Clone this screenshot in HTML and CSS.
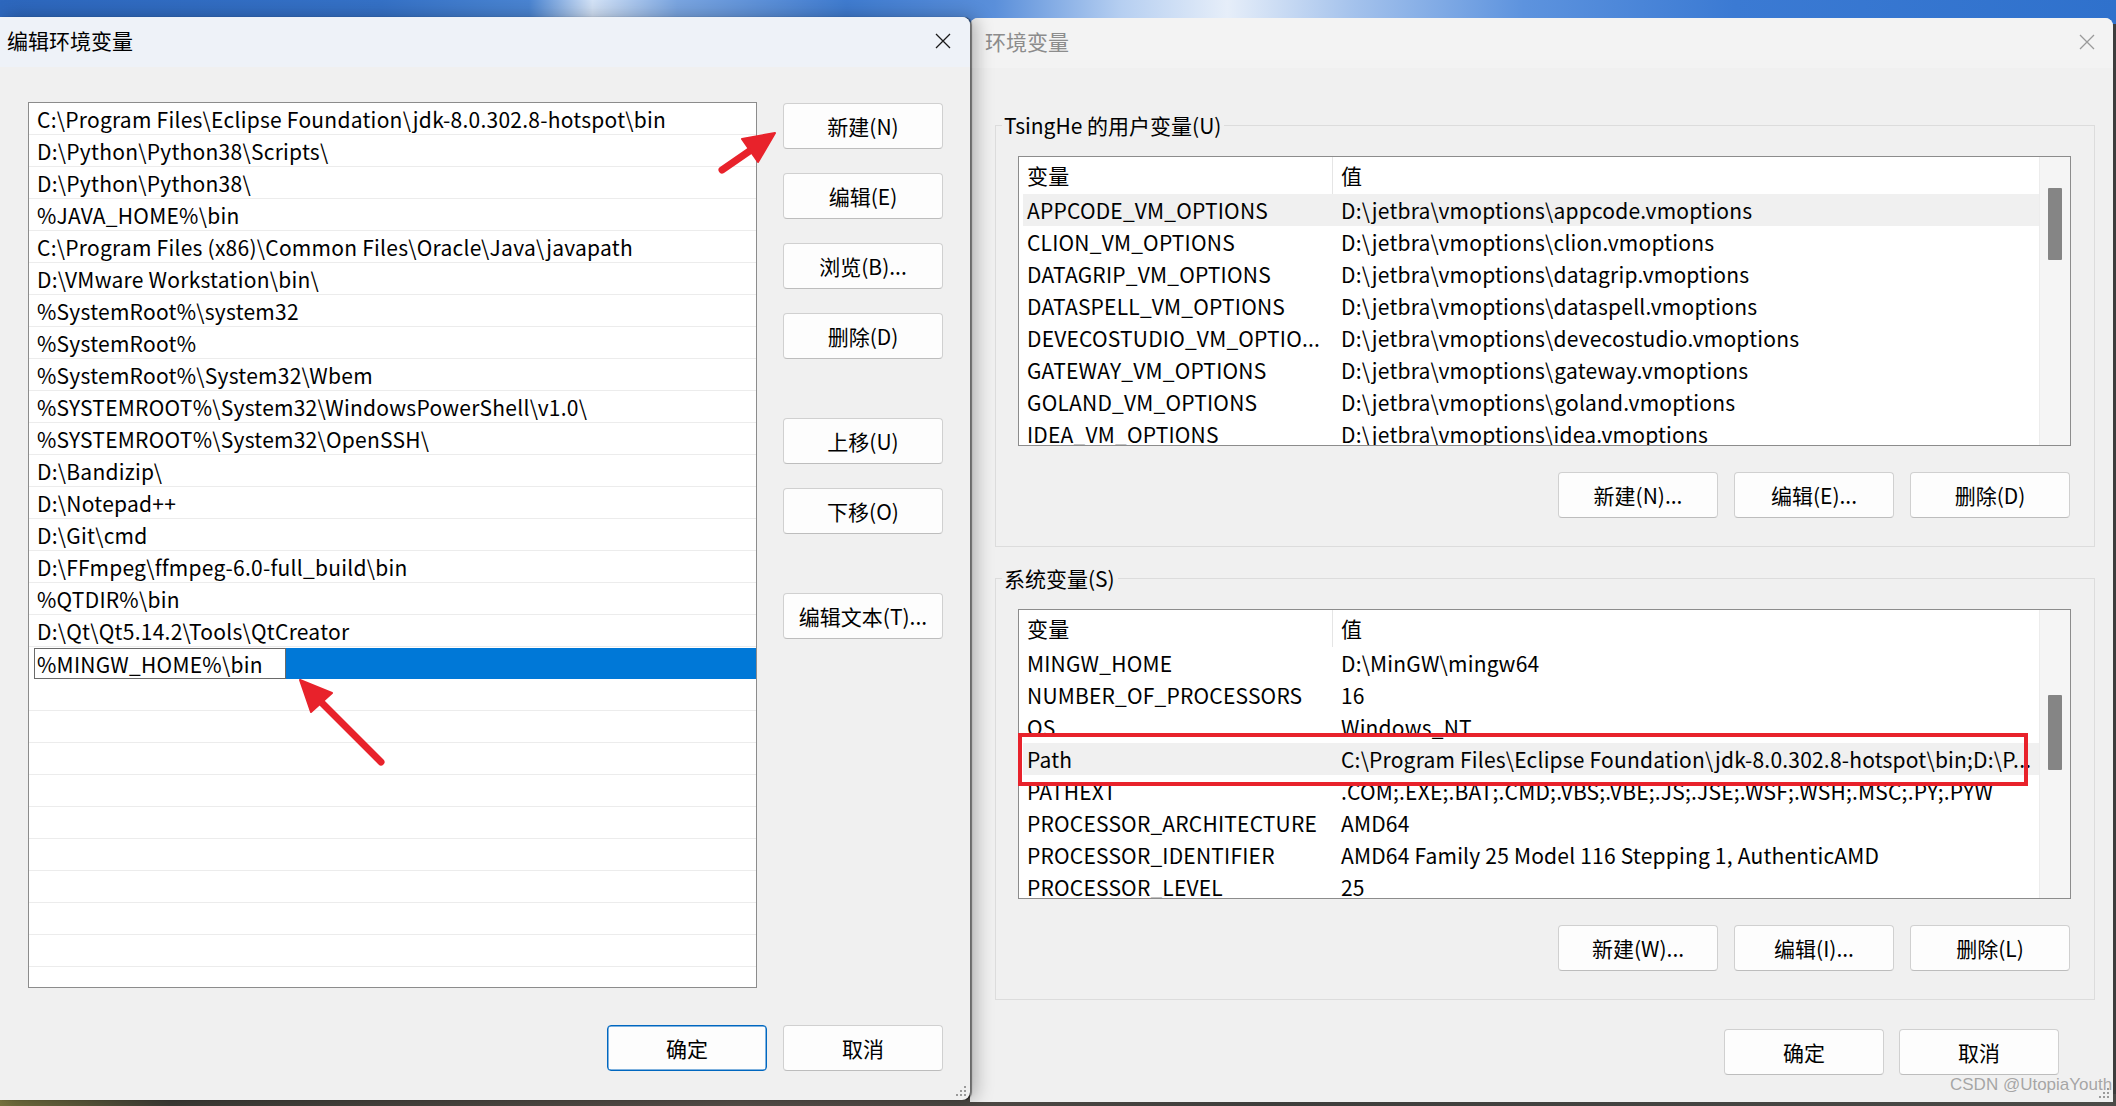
FILE: index.html
```html
<!DOCTYPE html>
<html lang="zh-CN">
<head>
<meta charset="utf-8">
<title>环境变量</title>
<link rel="stylesheet" href="styles.css">
</head>
<body>
<main class="desk">
  <section class="dlg dlg-edit">
    <header class="titlebar">
      <span class="title">编辑环境变量</span>
      <svg class="close" width="16" height="16" viewBox="0 0 16 16"><path d="M1 1L15 15M15 1L1 15" stroke="#1a1a1a" stroke-width="1.3" fill="none"/></svg>
    </header>
    <div class="dlg-body">
      <div class="edit-main">
        <div class="pathlist">
          <div class="prow">C:\Program Files\Eclipse Foundation\jdk-8.0.302.8-hotspot\bin</div>
          <div class="prow">D:\Python\Python38\Scripts\</div>
          <div class="prow">D:\Python\Python38\</div>
          <div class="prow">%JAVA_HOME%\bin</div>
          <div class="prow">C:\Program Files (x86)\Common Files\Oracle\Java\javapath</div>
          <div class="prow">D:\VMware Workstation\bin\</div>
          <div class="prow">%SystemRoot%\system32</div>
          <div class="prow">%SystemRoot%</div>
          <div class="prow">%SystemRoot%\System32\Wbem</div>
          <div class="prow">%SYSTEMROOT%\System32\WindowsPowerShell\v1.0\</div>
          <div class="prow">%SYSTEMROOT%\System32\OpenSSH\</div>
          <div class="prow">D:\Bandizip\</div>
          <div class="prow">D:\Notepad++</div>
          <div class="prow">D:\Git\cmd</div>
          <div class="prow">D:\FFmpeg\ffmpeg-6.0-full_build\bin</div>
          <div class="prow">%QTDIR%\bin</div>
          <div class="prow">D:\Qt\Qt5.14.2\Tools\QtCreator</div>
          <div class="prow sel"><span class="editbox">%MINGW_HOME%\bin</span></div>
          <div class="prow"></div>
          <div class="prow"></div>
          <div class="prow"></div>
          <div class="prow"></div>
          <div class="prow"></div>
          <div class="prow"></div>
          <div class="prow"></div>
          <div class="prow"></div>
          <div class="prow"></div>
          <div class="prow"></div>
        </div>
        <div class="side-btns">
          <button class="btn">新建(N)</button>
          <button class="btn">编辑(E)</button>
          <button class="btn">浏览(B)...</button>
          <button class="btn">删除(D)</button>
          <button class="btn sep">上移(U)</button>
          <button class="btn">下移(O)</button>
          <button class="btn sep">编辑文本(T)...</button>
        </div>
      </div>
      <div class="footer edit-footer">
        <button class="btn primary">确定</button>
        <button class="btn">取消</button>
      </div>
    </div>
    <svg class="grip" width="12" height="12" viewBox="0 0 12 12"><g fill="#9a9a9a"><rect x="9" y="1" width="2" height="2"/><rect x="5" y="5" width="2" height="2"/><rect x="9" y="5" width="2" height="2"/><rect x="1" y="9" width="2" height="2"/><rect x="5" y="9" width="2" height="2"/><rect x="9" y="9" width="2" height="2"/></g></svg>
  </section>

  <section class="dlg dlg-env">
    <header class="titlebar inactive">
      <span class="title">环境变量</span>
      <svg class="close" width="16" height="16" viewBox="0 0 16 16"><path d="M1 1L15 15M15 1L1 15" stroke="#9a9a9a" stroke-width="1.3" fill="none"/></svg>
    </header>
    <div class="env-body">
      <div class="group">
        <div class="group-label">TsingHe 的用户变量(U)</div>
        <div class="vlist">
          <div class="vbody">
            <div class="vhead"><span class="vname">变量</span><span class="vval">值</span></div>
            <div class="vrow hl"><span class="vname">APPCODE_VM_OPTIONS</span><span class="vval">D:\jetbra\vmoptions\appcode.vmoptions</span></div>
            <div class="vrow"><span class="vname">CLION_VM_OPTIONS</span><span class="vval">D:\jetbra\vmoptions\clion.vmoptions</span></div>
            <div class="vrow"><span class="vname">DATAGRIP_VM_OPTIONS</span><span class="vval">D:\jetbra\vmoptions\datagrip.vmoptions</span></div>
            <div class="vrow"><span class="vname">DATASPELL_VM_OPTIONS</span><span class="vval">D:\jetbra\vmoptions\dataspell.vmoptions</span></div>
            <div class="vrow"><span class="vname">DEVECOSTUDIO_VM_OPTIO...</span><span class="vval">D:\jetbra\vmoptions\devecostudio.vmoptions</span></div>
            <div class="vrow"><span class="vname">GATEWAY_VM_OPTIONS</span><span class="vval">D:\jetbra\vmoptions\gateway.vmoptions</span></div>
            <div class="vrow"><span class="vname">GOLAND_VM_OPTIONS</span><span class="vval">D:\jetbra\vmoptions\goland.vmoptions</span></div>
            <div class="vrow"><span class="vname">IDEA_VM_OPTIONS</span><span class="vval">D:\jetbra\vmoptions\idea.vmoptions</span></div>
          </div>
          <div class="vscroll"><div class="thumb thumb-user"></div></div>
        </div>
        <div class="footer group-footer">
          <button class="btn">新建(N)...</button>
          <button class="btn">编辑(E)...</button>
          <button class="btn">删除(D)</button>
        </div>
      </div>

      <div class="group group-sys">
        <div class="group-label">系统变量(S)</div>
        <div class="vlist">
          <div class="vbody">
            <div class="vhead"><span class="vname">变量</span><span class="vval">值</span></div>
            <div class="vrow"><span class="vname">MINGW_HOME</span><span class="vval">D:\MinGW\mingw64</span></div>
            <div class="vrow"><span class="vname">NUMBER_OF_PROCESSORS</span><span class="vval">16</span></div>
            <div class="vrow"><span class="vname">OS</span><span class="vval">Windows_NT</span></div>
            <div class="vrow hl"><span class="vname">Path</span><span class="vval">C:\Program Files\Eclipse Foundation\jdk-8.0.302.8-hotspot\bin;D:\P...</span></div>
            <div class="vrow"><span class="vname">PATHEXT</span><span class="vval">.COM;.EXE;.BAT;.CMD;.VBS;.VBE;.JS;.JSE;.WSF;.WSH;.MSC;.PY;.PYW</span></div>
            <div class="vrow"><span class="vname">PROCESSOR_ARCHITECTURE</span><span class="vval">AMD64</span></div>
            <div class="vrow"><span class="vname">PROCESSOR_IDENTIFIER</span><span class="vval">AMD64 Family 25 Model 116 Stepping 1, AuthenticAMD</span></div>
            <div class="vrow"><span class="vname">PROCESSOR_LEVEL</span><span class="vval">25</span></div>
          </div>
          <div class="vscroll"><div class="thumb thumb-sys"></div></div>
          <div class="redbox"></div>
        </div>
        <div class="footer group-footer">
          <button class="btn">新建(W)...</button>
          <button class="btn">编辑(I)...</button>
          <button class="btn">删除(L)</button>
        </div>
      </div>

      <div class="footer env-footer">
        <button class="btn">确定</button>
        <button class="btn">取消</button>
      </div>
    </div>
    <svg class="grip" width="12" height="12" viewBox="0 0 12 12"><g fill="#9a9a9a"><rect x="9" y="1" width="2" height="2"/><rect x="5" y="5" width="2" height="2"/><rect x="9" y="5" width="2" height="2"/><rect x="1" y="9" width="2" height="2"/><rect x="5" y="9" width="2" height="2"/><rect x="9" y="9" width="2" height="2"/></g></svg>
  </section>
</main>

<svg class="annot" width="2116" height="1106" viewBox="0 0 2116 1106">
  <g fill="#e8222b" stroke="#e8222b">
    <line x1="722" y1="170" x2="751" y2="150" stroke-width="7" stroke-linecap="round"/>
    <polygon points="775,133 742,139 758,162" stroke-width="2" stroke-linejoin="round"/>
    <line x1="381" y1="762" x2="322" y2="703" stroke-width="7" stroke-linecap="round"/>
    <polygon points="300,680 332,693 311,712" stroke-width="2" stroke-linejoin="round"/>
  </g>
</svg>
<div class="watermark">CSDN @UtopiaYouth</div>
</body>
</html>
```
FILE: styles.css
```css
* { box-sizing: border-box; margin: 0; padding: 0; }

html, body { width: 2116px; height: 1106px; overflow: hidden; }

body {
  font-family: "Noto Sans CJK SC", "Noto Sans", sans-serif;
  font-size: 21px;
  color: #000;
  position: relative;
  background:
    linear-gradient(90deg, #2d67bd 0%, #3571c6 18%, #4a84d1 25%, #d3e2f6 28%, #7aa5e0 32%, #3f7bcf 40%, #5a8fda 47%, #b6cff1 53%, #e6eef9 58%, #a4c2ec 64%, #5d93de 72%, #3b7ad3 82%, #2f71cc 100%) top / 100% 24px no-repeat,
    linear-gradient(90deg, #77733e 0%, #3e3c37 8%, #58504a 35%, #3e3d3b 60%, #4b4a47 100%) bottom / 100% 12px no-repeat,
    #3d3d3d;
}

.desk {
  display: flex;
  align-items: flex-start;
  padding-top: 17px;
}

.dlg { background: #f0f0f0; position: relative; }

.dlg-edit {
  width: 970px;
  z-index: 2;
  border-radius: 0 8px 8px 0;
  box-shadow: 2px 0 1px rgba(0, 0, 0, 0.45), 6px 0 18px rgba(0, 0, 0, 0.28);
}

.dlg-env {
  width: 1143px;
  margin-top: 1px;
  border-radius: 8px 8px 0 0;
}

.titlebar {
  height: 50px;
  display: flex;
  align-items: center;
  justify-content: space-between;
  background: #eef2f8;
  padding: 0 19px 4px 7px;
  border-radius: 0 8px 0 0;
}
.titlebar .title { font-size: 21px; line-height: 28px; }
.titlebar .close { margin-top: 2px; }
.titlebar.inactive {
  background: #f3f3f3;
  padding: 0 18px 4px 15px;
  border-radius: 8px 8px 0 0;
}
.titlebar.inactive .title { color: #8c8c8c; }

/* ---------- edit dialog ---------- */
.dlg-body { padding: 35px 27px 29px 28px; }

.edit-main { display: flex; gap: 26px; align-items: flex-start; }

.pathlist {
  width: 729px;
  height: 886px;
  border: 1px solid #8c8c8c;
  background: #fff;
  overflow: hidden;
  letter-spacing: 0.25px;
}

.prow {
  height: 32px;
  line-height: 33px;
  padding-left: 8px;
  border-bottom: 1px solid #ececec;
  white-space: nowrap;
}

.prow.sel {
  background: linear-gradient(#0078d7, #0078d7) content-box;
  padding: 1px 0 0 5px;
  border-bottom: 0;
}

.editbox {
  display: block;
  width: 252px;
  height: 31px;
  line-height: 30px;
  background: #fff;
  border: 1px solid #6a6a6a;
  padding-left: 2px;
}

.side-btns {
  display: flex;
  flex-direction: column;
  gap: 24px;
  padding-top: 1px;
}
.side-btns .sep { margin-top: 35px; }

.btn {
  width: 160px;
  height: 46px;
  font: inherit;
  font-size: 21px;
  color: #000;
  background: #fdfdfd;
  border: 1px solid #d0d0d0;
  border-bottom-color: #bdbdbd;
  border-radius: 4px;
}
.btn.primary { border-color: #0067c0; box-shadow: inset 0 0 0 0.5px #0067c0; }

.footer { display: flex; justify-content: flex-end; gap: 16px; }
.edit-footer { margin-top: 37px; }

/* ---------- env dialog ---------- */
.env-body { padding: 57px 18px 27px 25px; }

.group {
  border: 1px solid #dcdcdc;
  padding: 0 23px 28px 22px;
}
.group-sys { margin-top: 31px; }

.group-label {
  width: fit-content;
  margin: -15px 0 0 -16px;
  padding: 0 3px 0 2px;
  line-height: 28px;
  background: #f0f0f0;
}

.vlist {
  position: relative;
  margin-top: 17px;
  height: 290px;
  border: 1px solid #8c8c8c;
  background: #fff;
  display: flex;
}

.vbody { flex: 1; padding-left: 4px; overflow: hidden; letter-spacing: 0.2px; }

.vhead, .vrow {
  display: grid;
  grid-template-columns: 310px 1fr;
  white-space: nowrap;
}
.vhead { height: 37px; line-height: 37px; }
.vhead .vname { border-right: 1px solid #e5e5e5; }
.vrow { height: 32px; line-height: 32px; }
.vrow.hl { background: #f0f0f0; }

.vname { padding-left: 4px; overflow: hidden; }
.vval { padding-left: 8px; overflow: hidden; }

.vscroll {
  width: 31px;
  background: #f5f5f5;
  border-left: 1px solid #ececec;
  padding-left: 8px;
}
.thumb { width: 14px; background: #858585; border-radius: 1px; }
.thumb-user { margin-top: 31px; height: 72px; }
.thumb-sys { margin-top: 85px; height: 75px; }

.redbox {
  position: absolute;
  left: -1px;
  top: 123px;
  width: 1010px;
  height: 53px;
  border: 4px solid #e8222b;
}

.group-footer { margin-top: 26px; padding-right: 1px; }
.env-footer { margin-top: 29px; padding-right: 36px; gap: 15px; }

.grip { position: absolute; right: 3px; bottom: 3px; }

.annot { position: absolute; left: 0; top: 0; pointer-events: none; z-index: 5; }

.watermark {
  position: absolute;
  left: 1950px;
  top: 1075px;
  font-family: "Liberation Sans", Arial, sans-serif;
  font-size: 17px;
  color: rgba(140, 140, 140, 0.75);
  z-index: 6;
}
```
